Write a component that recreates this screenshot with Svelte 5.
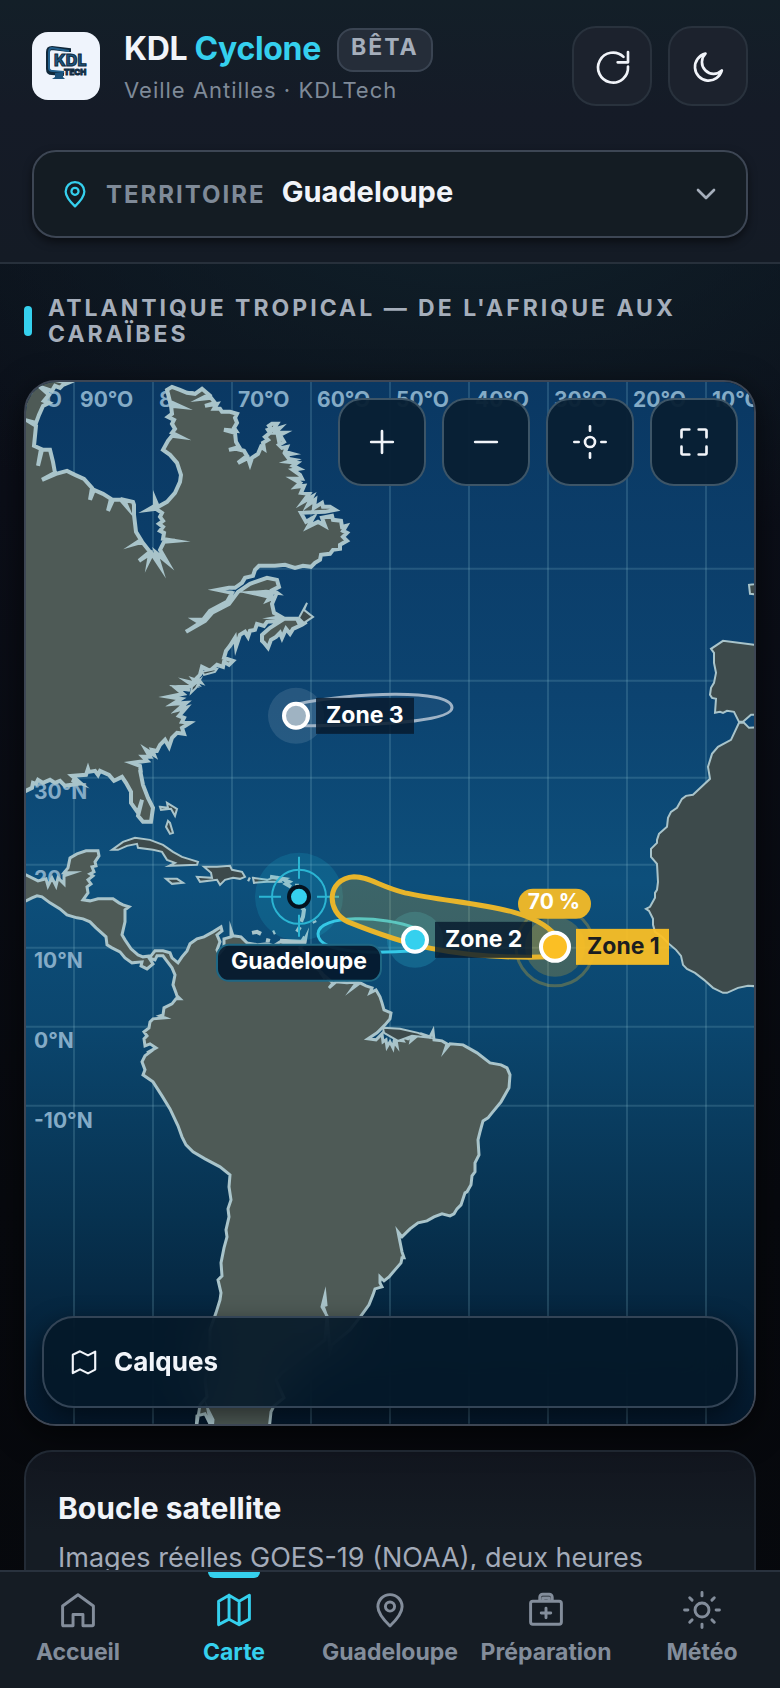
<script lang="ts">
  type Tab = { id: string; label: string; icon: string };

  const tabs: Tab[] = [
    { id: 'accueil', label: 'Accueil', icon: 'M3.6 9.8 12 3.7l8.4 6.1V20a.6.6 0 0 1-.6.6h-5.1v-6.1H9.3v6.1H4.2a.6.6 0 0 1-.6-.6z' },
    { id: 'carte', label: 'Carte', icon: 'M3.6 7.2 9.3 4l5.5 3.2L20.4 4v13L14.8 20l-5.5-3-5.7 3zM9.3 4v13M14.8 7.2V20' },
    { id: 'guadeloupe', label: 'Guadeloupe', icon: 'M12 20.7c-3-2.9-6.6-6.8-6.6-10.5a6.6 6.6 0 0 1 13.2 0c0 3.7-3.6 7.6-6.6 10.5zM12 7.6a2.5 2.5 0 1 0 0 5 2.5 2.5 0 0 0 0-5z' },
    { id: 'preparation', label: 'Préparation', icon: 'M4.8 7.2h14.4a1.2 1.2 0 0 1 1.2 1.2v10.2a1.2 1.2 0 0 1-1.2 1.2H4.8a1.2 1.2 0 0 1-1.2-1.2V8.4a1.2 1.2 0 0 1 1.2-1.2zM8.6 7.2V5a1.6 1.6 0 0 1 1.6-1.6h3.6A1.6 1.6 0 0 1 15.4 5v2.2M10.3 7V5.5h3.4V7M12 11v5.2M9.4 13.6h5.2' },
    { id: 'meteo', label: 'Météo', icon: 'M12 8.2a3.8 3.8 0 1 0 0 7.6 3.8 3.8 0 0 0 0-7.6zM12 2.5v1.8M12 19.7v1.8M2.5 12h1.8M19.7 12h1.8M5.3 5.3l1.3 1.3M17.4 17.4l1.3 1.3M5.3 18.7l1.3-1.3M17.4 6.6l1.3-1.3' }
  ];

  const controls = [
    { label: 'Zoomer', icon: 'M12 5.5v13M5.5 12h13' },
    { label: 'Dézoomer', icon: 'M5.5 12h13' },
    { label: 'Recentrer', icon: 'M12 9a3 3 0 1 0 0 6 3 3 0 0 0 0-6zM12 2.6v2.6M12 18.8v2.6M2.6 12h2.6M18.8 12h2.6' },
    { label: 'Plein écran', icon: 'M4.5 9.2v-4a.7.7 0 0 1 .7-.7h4M14.8 4.5h4a.7.7 0 0 1 .7.7v4M19.5 14.8v4a.7.7 0 0 1-.7.7h-4M9.2 19.5h-4a.7.7 0 0 1-.7-.7v-4' }
  ];

  let territory = $state('Guadeloupe');
  let active = $state('carte');

  // graticule
  const meridians = [74, 153, 232, 311, 390, 469, 548, 627, 706];
  const parallels = [569, 681, 778, 865, 948, 1027, 1106];
  const lonLabels = meridians.map((x, i) => ({ x: x + 6, text: `${90 - i * 10}°O` }));
  const latLabels = [
    { y: 799, text: '30°N' },
    { y: 886, text: '20°N' },
    { y: 968, text: '10°N' },
    { y: 1048, text: '0°N' },
    { y: 1128, text: '-10°N' }
  ];

  // coastlines
  const northAmerica =
    'M10 370L68 383 63 385 60 388 55 386 52 391 40 387 49 395 44 401 49 403 43 406 39 415 36 423 28 421 36 426 35 436 34 446 41 449 38 466 42 450 50 450 53 462 55 473 42 480 56 474 67 471 75 475 84 479 92 488 90 500 94 490 103 494 111 499 108 511 113 500 121 500 127 507 124 500 133 502 134 505 134 515 136 532 141 540 135 544 142 542 150 552 139 561 150 554 149 560 152 554 160 566 156 553 167 562 160 550 164 542 175 541 163 539 164 533 160 531 163 527 159 524 163 521 160 517 162 513 156 509 148 510 155 506 155 500 158 507 167 502 175 493 180 482 181 475 177 463 170 455 163 450 168 441 172 436 180 437 172 433 175 429 172 424 174 420 168 417 172 414 171 406 181 407 170 402 168 394 167 390 172 387 180 390 187 393 195 394 202 389 209 395 201 399 211 398 215 403 205 406 217 404 214 409 220 409 222 412 230 412 237 414 235 418 237 423 234 428 236 431 224 430 235 433 236 442 239 447 229 450 236 449 244 451 247 456 238 463 248 458 250 464 252 458 258 454 261 447 264 449 263 443 268 440 265 437 270 433 268 430 271 429 269 426 272 424 277 424 273 430 280 428 275 433 284 433 278 436 279 441 281 437 284 442 279 445 282 448 287 447 285 452 292 454 286 455 289 459 294 460 288 462 297 463 293 466 299 469 293 470 300 475 302 479 293 479 300 483 296 487 304 486 301 493 309 494 303 502 312 497 308 505 315 500 314 508 322 503 323 507 330 507 335 510 325 512 301 513 306 522 313 518 308 527 318 522 325 526 322 518 332 516 333 520 341 521 342 527 346 526 343 531 347 533 343 537 347 541 340 545 340 549 333 550 330 554 321 555 320 560 315 563 311 567 303 566 295 568 285 565 275 566 259 566 255 570 253 576 245 578 242 583 235 588 229 588 218 590 232 593 227 602 210 611 203 620 195 620 200 623 186 632 205 621 212 613 229 604 238 592 250 584 267 578 277 580 279 587 273 590 277 593 266 592 252 593 266 596 271 595 268 600 275 597 272 604 274 613 281 617 276 618 287 619 297 619 299 623 303 619 305 623 302 625 293 629 290 634 286 629 282 638 280 633 276 637 271 640 268 648 264 643 262 641 262 635 270 628 281 621 267 622 264 626 257 624 255 630 250 631 248 637 245 632 240 635 236 647 235 638 230 646 226 651 224 658 233 661 229 665 224 662 223 667 217 665 210 671 202 667 200 675 197 678 200 682 194 680 197 684 188 682 194 686 180 687 190 690 176 688 183 694 169 697 181 699 173 704 186 703 178 710 186 708 179 716 184 718 182 722 190 723 182 728 184 734 177 733 172 738 169 747 165 740 160 745 157 751 152 750 154 755 146 750 150 757 143 757 147 761 132 763 140 766 141 773 140 770 143 785 148 798 153 808 151 822 143 822 138 816 142 800 138 813 131 803 131 792 126 783 122 777 114 781 109 775 100 771 98 775 95 771 89 772 88 769 86 775 72 776 80 783 72 780 78 784 65 786 60 781 55 783 50 780 43 783 38 780 36 784 33 783 32 788 26 791 10 794z';
  const americas =
    'M10 873L26 875 38 881 46 879 48 886 52 878 56 886 58 878 64 884 64 876 73 873 64 873 68 868 70 858 77 854 86 851 98 851 99 856 95 862 96 866 92 867 94 872 90 874 93 876 88 880 91 884 87 887 88 893 83 900 90 901 98 899 113 899 119 903 123 905 129 907 125 910 125 922 122 935 125 940 131 949 138 955 143 957 151 956 155 951 163 951 170 953 172 958 178 963 182 957 187 951 190 944 197 939 204 937 213 932 221 927 222 931 217 935 220 942 217 950 219 954 224 948 224 939 231 937 231 930 233 936 241 937 247 943 258 945 267 944 274 946 280 942 288 944 303 943 306 937 305 943 300 948 306 954 310 963 322 973 325 979 320 972 333 983 329 988 336 982 347 983 357 982 352 989 360 983 366 986 372 988 370 993 376 990 380 997 382 1003 384 1010 391 1013 390 1019 385 1025 380 1030 377 1033 368 1039 376 1040 382 1034 383 1042 386 1040 387 1047 390 1042 393 1048 394 1042 397 1046 396 1040 403 1041 400 1036 408 1039 412 1036 411 1041 417 1036 421 1034 430 1037 433 1031 434 1040 442 1041 447 1044 445 1050 450 1044 463 1045 470 1049 477 1053 490 1063 501 1065 507 1068 510 1075 509 1088 501 1102 492 1113 488 1118 483 1121 480 1132 478 1140 479 1155 475 1163 475 1172 472 1176 471 1185 467 1192 465 1193 461 1205 457 1209 454 1214 450 1216 442 1214 434 1217 427 1221 418 1223 410 1229 402 1237 398 1232 400 1242 402 1252 404 1258 402 1258 401 1263 395 1270 389 1277 384 1281 380 1277 380 1283 382 1287 375 1289 373 1295 369 1305 361 1316 350 1330 332 1345 330 1351 327 1316 322 1307 325 1295 326 1305 323 1306 327 1317 325 1340 282 1373 276 1380 284 1398 274 1406 271 1412 268 1440 211 1440 213 1420 208 1410 211 1426 205 1414 197 1416 196 1430 200 1405 207 1397 205 1380 210 1355 210 1330 216 1313 220 1300 221 1293 218 1280 222 1276 221 1263 224 1248 227 1237 226 1230 229 1217 228 1209 231 1200 229 1187 230 1175 220 1167 205 1159 193 1152 186 1145 182 1137 178 1126 170 1109 162 1096 153 1082 143 1075 145 1070 142 1062 145 1056 153 1050 147 1053 156 1048 150 1044 145 1046 144 1039 147 1036 144 1032 149 1028 150 1022 153 1019 165 1018 160 1016 163 1015 164 1008 172 1004 176 999 180 999 177 996 176 993 173 985 175 975 172 968 166 960 163 956 157 956 155 960 149 958 153 964 147 969 141 966 142 962 132 963 125 958 120 952 112 948 107 945 106 937 96 928 90 922 83 919 77 918 67 915 60 909 50 903 42 897 37 896 32 898 26 901 10 904z';
  const europeAfrica =
    'M770 646L754 645 723 641 711 649 714 653 714 663 716 673 714 683 711 688 710 695 712 698 716 699 715 713 720 712 723 713 727 711 734 712 739 722 743 722 751 715 770 714z' +
    'M770 727L749 728 744 723 739 723 731 740 718 747 712 754 708 767 710 779 693 795 686 796 682 799 677 808 671 812 668 818 667 827 659 834 657 840 657 843 651 849 651 857 657 864 658 882 657 890 655 893 655 898 650 907 646 909 649 911 653 919 653 925 655 932 662 937 670 945 676 950 681 956 683 965 687 969 695 973 704 980 713 988 723 993 727 993 738 988 748 986 770 987z' +
    'M770 582L749 585 750 594 770 596z';
  const islands =
    'M112 850L123 842 135 838 150 840 163 845 173 852 182 857 198 862 197 865 169 866 175 863 167 860 162 852 153 850 138 848 137 844 127 846 118 850z' +
    'M204 867L217 867 230 866 232 870 242 872 245 877 240 879 233 878 225 880 220 885 217 880 200 882 197 877 212 878 211 873z' +
    'M166 879L177 879 183 883 172 884zM253 878L267 880 277 877 281 882 267 882 254 883zM160 807L168 808 167 803 177 809 175 816 171 809 161 810z' +
    'M168 821L170 823 173 833 170 834 166 827zM307 603L304 610 313 617 304 623 299 618zM383 1028L400 1029 418 1033 430 1038 412 1036 398 1041 384 1033z' +
    'M202 672L217 669 215 672 204 675zM192 687L200 680 196 688 191 693z';
  const antilles =
    'M270 877L283 879 278 881M284 880L289 882 286 884 291 887M297 884L297 886M302 908L304 910 303 917 301 922M300 927L297 932M314 921L315 923M248 879L250 880M252 933L257 932 261 934M273 933L275 932M266 940L270 941M280 941L302 942 305 937';
</script>

{#snippet icon(path: string, size: number)}
  <svg class="icon" width={size} height={size} viewBox="0 0 24 24" aria-hidden="true"><path d={path} /></svg>
{/snippet}

<div class="app">
  <header class="header">
    <div class="header__bar">
      <svg class="logo" viewBox="0 0 68 68" role="img" aria-label="KDL Tech">
        <rect width="68" height="68" rx="16" fill="#eff4fc" />
        <path d="M37 20V18L20 16q-4 0-4 4v17q0 4 4 4l12 1" fill="none" stroke="#10283b" stroke-width="4" />
        <path d="M37 19 20 16q-3 0-3 4v16q0 3 4 3l11 1" fill="none" stroke="#215f8c" stroke-width="2" />
        <path d="M23 41h8v4l2 2H20l3-2z" fill="#1c527b" />
        <text class="logo__name" x="22" y="34">KDL</text>
        <text class="logo__tech" x="32" y="43">TECH</text>
      </svg>
      <div class="brand">
        <div class="brand__row">
          <h1>KDL <span>Cyclone</span></h1>
          <span class="beta">BÊTA</span>
        </div>
        <p>Veille Antilles · KDLTech</p>
      </div>
      <div class="header__actions">
        <button aria-label="Actualiser">{@render icon('M21.6 12.3A9 9 0 1 1 18.9 6.5M21.6 3.6v6.2h-6.2', 40)}</button>
        <button aria-label="Thème sombre">{@render icon('M20.3 14.7A8.2 8.2 0 1 1 10.5 4.6 7 7 0 0 0 20.3 14.7z', 40)}</button>
      </div>
    </div>

    <label class="territory">
      {@render icon(tabs[2].icon, 34)}
      <span>Territoire</span>
      <select bind:value={territory}>
        <option>Guadeloupe</option>
      </select>
      {@render icon('M6 9l6 6 6-6', 32)}
    </label>
  </header>

  <main>
    <h2 class="section-title">Atlantique tropical — de l'Afrique aux Caraïbes</h2>

    <section class="map">
      <svg class="map__canvas" viewBox="26 382 728 1042" preserveAspectRatio="xMidYMid slice" role="img" aria-label="Carte de l'Atlantique tropical">
        <defs>
          <linearGradient id="sea" x1="0" y1="0" x2="0" y2="1">
            <stop offset="0" stop-color="#0a3863" />
            <stop offset="0.3" stop-color="#0c4370" />
            <stop offset="0.48" stop-color="#0d4f7b" />
            <stop offset="0.62" stop-color="#0b466e" />
            <stop offset="0.8" stop-color="#073250" />
            <stop offset="1" stop-color="#04182c" />
          </linearGradient>
        </defs>
        <rect x="26" y="382" width="728" height="1042" fill="url(#sea)" />

        <g class="grid">
          {#each meridians as x}<path d="M{x} 382V1424" />{/each}
          {#each parallels as y}<path d="M26 {y}H754" />{/each}
        </g>
        <g class="degrees">
          <text x="62" y="407" text-anchor="end">100°O</text>
          {#each lonLabels as label}<text x={label.x} y="407">{label.text}</text>{/each}
          {#each latLabels as label}<text x="34" y={label.y}>{label.text}</text>{/each}
        </g>

        <path class="land land--near" d={northAmerica} />
        <path class="land land--near land--south" d={americas} />
        <path class="land land--far" d={europeAfrica} />
        <path class="land land--far" d={islands} />
        <path class="antilles" d={antilles} />

        <g class="here">
          <circle cx="299" cy="897" r="44" fill="#22c3e0" opacity="0.16" />
          <circle cx="299" cy="897" r="27" />
          <path d="M299 857v22M299 915v22M259 897h22M317 897h22" />
        </g>

        <path d="M298 704C350 693 452 688 452 708 452 724 350 726 298 726z" fill="#9fb6c8" fill-opacity="0.08" stroke="#9fb3c6" stroke-width="3" />
        <path d="M415 928C385 916 318 914 318 934 318 956 385 953 415 951" fill="#35d0ee" fill-opacity="0.15" stroke="#35c8e6" stroke-width="3" />
        <circle cx="415" cy="940" r="28" fill="#35d0ee" opacity="0.2" />
        <path d="M555 935C530 905 460 905 405 893 378 886 370 877 354 877 326 879 326 912 348 922 400 943 450 960 550 957z" fill="#fbbf24" fill-opacity="0.2" stroke="#e8b52b" stroke-width="5" />
        <circle cx="555" cy="947" r="30" fill="#e8b52b" opacity="0.24" />
        <circle cx="555" cy="947" r="39" fill="none" stroke="#e8b52b" stroke-width="3" opacity="0.3" />

        <circle cx="299" cy="897" r="10" fill="#35d0ee" stroke="#04121f" stroke-width="4" />
        <g class="label">
          <rect x="217" y="945" width="164" height="36" rx="12" fill="#051a2e" fill-opacity="0.94" stroke="#1f6784" stroke-width="2" />
          <text x="299" y="969" text-anchor="middle">Guadeloupe</text>

          <circle cx="296" cy="716" r="28" fill="#9fb6c8" opacity="0.18" />
          <rect x="316" y="698" width="98" height="36" fill="#071b2e" fill-opacity="0.86" />
          <circle cx="296" cy="716" r="12" fill="#9fb3c2" stroke="#fff" stroke-width="4" />
          <text x="326" y="723">Zone 3</text>

          <rect x="435" y="922" width="97" height="36" fill="#071b2e" fill-opacity="0.82" />
          <circle cx="415" cy="940" r="12" fill="#35d0ee" stroke="#fff" stroke-width="4" />
          <text x="445" y="947">Zone 2</text>

          <rect x="576" y="929" width="93" height="36" fill="#fbbf24" fill-opacity="0.94" />
          <circle cx="555" cy="947" r="14" fill="#fbbf24" stroke="#fff" stroke-width="4" />
          <text class="label__dark" x="587" y="954">Zone 1</text>

          <rect x="518" y="889" width="73" height="30" rx="15" fill="#e8b52b" />
          <text x="554" y="909" text-anchor="middle" class="label__percent">70 %</text>
        </g>
      </svg>

      <div class="map__controls">
        {#each controls as control}
          <button aria-label={control.label}>{@render icon(control.icon, 40)}</button>
        {/each}
      </div>

      <button class="layers">
        {@render icon('M3.6 6.5 9 4l6 3 5.4-2.8v13.5L15 20.5l-6-3-5.4 2.8z', 32)}
        Calques
      </button>
    </section>

    <section class="card">
      <h3>Boucle satellite</h3>
      <p>Images réelles GOES-19 (NOAA), deux heures</p>
    </section>
  </main>

  <nav class="tabs">
    {#each tabs as tab}
      <a href="#{tab.id}" class:active={active === tab.id} onclick={() => (active = tab.id)}>
        {@render icon(tab.icon, 44)}
        {tab.label}
      </a>
    {/each}
  </nav>
</div>

<style>
  :global(body) {
    margin: 0;
    min-height: 100vh;
    background:
      radial-gradient(ellipse 90% 360px at 60% 200px, #10202a 0%, transparent 100%),
      linear-gradient(#0c121b, #0b0e18 500px, #07090e 1200px, #06080c);
  }

  .app {
    color: #f1f4f9;
    font-family: Inter, sans-serif;
    font-size: 26px;
  }

  h1,
  h2,
  h3,
  p {
    margin: 0;
  }

  button,
  select {
    font: inherit;
    color: inherit;
  }

  .icon {
    flex: none;
    fill: none;
    stroke: currentColor;
    stroke-width: 1.6;
    stroke-linecap: round;
    stroke-linejoin: round;
  }

  .header {
    display: flex;
    flex-direction: column;
    gap: 44px;
    padding: 26px 32px 24px;
    border-bottom: 2px solid #27303b;
    background: linear-gradient(#131f28, #151b27 110px, #141b25);
  }

  .header__bar {
    display: flex;
    align-items: center;
    gap: 24px;
  }

  .logo {
    flex: none;
    width: 68px;
    height: 68px;
  }

  .logo__name,
  .logo__tech {
    fill: #1d5681;
    stroke: #10283b;
    stroke-width: 1;
    font-weight: 800;
    font-size: 16px;
  }

  .logo__tech {
    font-size: 8px;
  }

  .brand {
    flex: 1;
  }

  .brand__row {
    display: flex;
    align-items: flex-start;
    gap: 16px;
  }

  .brand h1 {
    font-size: 32px;
    line-height: 42px;
    font-weight: 700;
    letter-spacing: -0.01em;
  }

  .brand h1 span {
    color: #35d0ee;
  }

  .beta {
    padding: 5px 12px 11px;
    border: 2px solid #3a4452;
    border-radius: 16px;
    background: #252d39;
    color: #a5aebb;
    font-size: 23px;
    line-height: 24px;
    font-weight: 700;
    letter-spacing: 2px;
  }

  .brand p {
    margin-top: 4px;
    color: #7f8a98;
    font-size: 22px;
    line-height: 28px;
    letter-spacing: 1px;
  }

  .header__actions {
    display: flex;
    gap: 16px;
  }

  .header__actions button {
    display: grid;
    place-items: center;
    width: 80px;
    height: 80px;
    padding: 0;
    border: 2px solid #29323d;
    border-radius: 24px;
    background: #1c222d;
  }

  .territory {
    display: flex;
    align-items: center;
    height: 84px;
    padding: 0 24px;
    border: 2px solid #3d4654;
    border-radius: 24px;
    background: #141c23;
    box-shadow: 0 4px 8px rgb(0 0 0 / 50%);
    color: #35d0ee;
  }

  .territory span {
    margin-left: 14px;
    color: #7f8a98;
    font-size: 24px;
    font-weight: 700;
    letter-spacing: 2px;
    text-transform: uppercase;
  }

  .territory select {
    flex: 1;
    margin: 0 16px;
    padding: 0 0 6px;
    appearance: none;
    border: 0;
    background: none;
    color: #f1f4f9;
    font-size: 29px;
    font-weight: 700;
  }

  .territory .icon:last-child {
    color: #a5aebb;
    stroke-width: 2;
  }

  main {
    padding: 31px 24px;
  }

  .section-title {
    display: flex;
    align-items: center;
    gap: 16px;
    margin-bottom: 33px;
    color: #a5aebb;
    font-size: 23px;
    line-height: 26px;
    font-weight: 700;
    letter-spacing: 3px;
    text-transform: uppercase;
  }

  .section-title::before {
    content: '';
    flex: none;
    width: 8px;
    height: 30px;
    border-radius: 4px;
    background: #35d0ee;
  }

  .map {
    position: relative;
    box-sizing: border-box;
    aspect-ratio: 7 / 10;
    overflow: hidden;
    border: 2px solid #3d4654;
    border-radius: 32px;
    box-shadow: 0 8px 32px rgb(0 0 0 / 60%);
  }

  .map__canvas {
    display: block;
    width: 100%;
    height: 100%;
  }

  .grid {
    fill: none;
    stroke: #7fb4c8;
    stroke-opacity: 0.22;
    stroke-width: 2;
  }

  .degrees {
    fill: #84abc6;
    font-size: 21px;
    font-weight: 700;
  }

  .land {
    stroke: #a9c4ca;
    stroke-width: 4;
    stroke-miterlimit: 8;
  }

  .land--near {
    fill: #4e5a56;
  }

  .land--south {
    stroke-width: 3;
  }

  .land--far {
    fill: #3d4a4b;
    stroke-width: 2;
  }

  .antilles {
    fill: none;
    stroke: #a9c4ca;
    stroke-width: 4;
  }

  .here {
    fill: none;
    stroke: #2bb5d3;
    stroke-width: 2;
  }

  .here circle:first-child {
    stroke: none;
  }

  .label text {
    fill: #fff;
    font-size: 23px;
    font-weight: 700;
  }

  .label text.label__dark {
    fill: #1b1d20;
  }

  .label text.label__percent {
    font-size: 21px;
  }

  .map__controls {
    position: absolute;
    top: 16px;
    right: 16px;
    display: flex;
    gap: 16px;
  }

  .map__controls button {
    display: grid;
    place-items: center;
    width: 88px;
    height: 88px;
    padding: 0;
    border: 2px solid #3d5567;
    border-radius: 24px;
    background: rgb(8 31 51 / 96%);
  }

  .layers {
    position: absolute;
    right: 16px;
    bottom: 16px;
    left: 16px;
    display: flex;
    align-items: center;
    gap: 14px;
    height: 92px;
    padding: 0 24px;
    border: 2px solid #334456;
    border-radius: 32px;
    background: rgb(4 24 40 / 88%);
    backdrop-filter: blur(24px);
    box-shadow: 0 8px 24px rgb(0 0 0 / 50%);
    font-weight: 700;
  }

  .card {
    margin-top: 24px;
    padding: 36px 32px 24px;
    border: 2px solid #232b36;
    border-radius: 28px;
    background: linear-gradient(#12161f, #151c24 80px);
  }

  .card h3 {
    font-size: 30px;
    line-height: 40px;
    font-weight: 700;
  }

  .card p {
    margin-top: 8px;
    color: #a3abb9;
    font-size: 27px;
    line-height: 44px;
  }

  .tabs {
    position: fixed;
    right: 0;
    bottom: 0;
    left: 0;
    display: grid;
    grid-template-columns: repeat(5, 1fr);
    height: 116px;
    border-top: 2px solid #29323e;
    background: #151c24;
  }

  .tabs a {
    position: relative;
    display: flex;
    flex-direction: column;
    align-items: center;
    gap: 6px;
    padding-top: 16px;
    color: #838d9b;
    font-size: 23px;
    line-height: 28px;
    font-weight: 700;
    text-decoration: none;
  }

  .tabs a.active {
    color: #35d0ee;
  }

  .tabs a.active::before {
    content: '';
    position: absolute;
    top: 0;
    width: 52px;
    height: 6px;
    border-radius: 0 0 6px 6px;
    background: #35d0ee;
  }
</style>
